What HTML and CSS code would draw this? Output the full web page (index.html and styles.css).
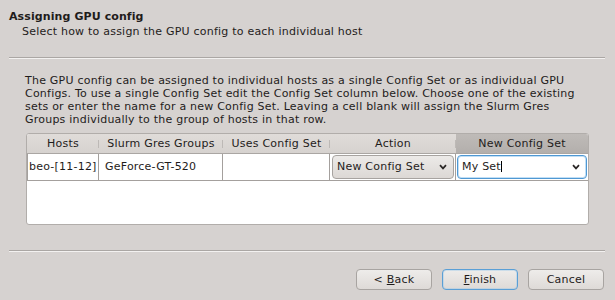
FILE: index.html
```html
<!DOCTYPE html>
<html>
<head>
<meta charset="utf-8">
<title>Assigning GPU config</title>
<link rel="stylesheet" href="styles.css">
</head>
<body>
<div class="wizard">
  <div class="page-head">
    <div class="title">Assigning GPU config</div>
    <div class="subtitle">Select how to assign the GPU config to each individual host</div>
  </div>
  <div class="sep"></div>
  <div class="content">
    <p class="intro">The GPU config can be assigned to individual hosts as a single Config Set or as individual GPU<br>Configs. To use a single Config Set edit the Config Set column below. Choose one of the existing<br>sets or enter the name for a new Config Set. Leaving a cell blank will assign the Slurm Gres<br>Groups individually to the group of hosts in that row.</p>
    <div class="table">
      <div class="thead">
        <div class="th">Hosts</div>
        <div class="th">Slurm Gres Groups</div>
        <div class="th">Uses Config Set</div>
        <div class="th">Action</div>
        <div class="th sorted">New Config Set</div>
      </div>
      <div class="row">
        <div class="td c-hosts">beo-[11-12]</div>
        <div class="td c-groups">GeForce-GT-520</div>
        <div class="td"></div>
        <div class="td c-action">
          <div class="combo"><span>New Config Set</span><svg class="chev" width="8" height="6" viewBox="0 0 8 6"><path d="M1 1.2 L4 4.4 L7 1.2" fill="none" stroke="#2a2726" stroke-width="1.7"/></svg></div>
        </div>
        <div class="td c-new">
          <div class="combo edit"><span>My Set<span class="caret"></span></span><svg class="chev" width="8" height="6" viewBox="0 0 8 6"><path d="M1 1.2 L4 4.4 L7 1.2" fill="none" stroke="#2a2726" stroke-width="1.7"/></svg></div>
        </div>
      </div>
    </div>
  </div>
  <div class="sep"></div>
  <div class="buttons">
    <button class="btn"><span>&lt; <u>B</u>ack</span></button>
    <button class="btn default"><span><u>F</u>inish</span></button>
    <button class="btn"><span>Cancel</span></button>
  </div>
</div>
</body>
</html>
```

FILE: styles.css
```css
* { box-sizing: border-box; }
html, body { margin: 0; padding: 0; }
body {
  background: #d6d2d0;
  font-family: "DejaVu Sans", "Liberation Sans", sans-serif;
  font-size: 11px;
  letter-spacing: 0.22px;
  color: #1f1c1b;
}
.wizard {
  width: 615px;
  height: 300px;
  display: flex;
  flex-direction: column;
}
.page-head {
  height: 57px;
  padding: 9px 0 0 9px;
}
.title {
  font-weight: bold;
  line-height: 15px;
  letter-spacing: 0.1px;
}
.subtitle {
  line-height: 15px;
  padding-left: 13px;
}
.sep {
  height: 2px;
  margin: 0 10px 0 9px;
  border-top: 1px solid #aba7a4;
  border-bottom: 1px solid #f3f1f0;
}
.content {
  flex: 1;
  padding: 15px 0 0 25px;
}
.intro {
  margin: 0;
  line-height: 13px;
  white-space: nowrap;
}
.table {
  margin-top: 7px;
  margin-left: 1px;
  width: 563px;
  height: 92px;
  background: #fff;
  border: 1px solid #b1adaa;
  border-radius: 3px;
  overflow: hidden;
}
.thead, .row {
  display: grid;
  grid-template-columns: 72px 124px 107px 126px 132px;
}
.thead {
  height: 20px;
  border-bottom: 1px solid #aaa6a3;
  background: linear-gradient(#e0dcd9, #d6d2cf);
}
.th {
  position: relative;
  line-height: 19px;
  text-align: center;
  white-space: nowrap;
}
.th::after {
  content: "";
  position: absolute;
  right: 0;
  top: 6px;
  width: 1px;
  height: 8px;
  background: #bdb9b6;
}
.th.sorted {
  background: linear-gradient(#bfbbb8, #b3afac);
}
.th.sorted::after { display: none; }
.row {
  height: 27px;
  border-bottom: 1px solid #a4a09d;
}
.td {
  border-right: 1px solid #a4a09d;
  line-height: 26px;
  white-space: nowrap;
  overflow: hidden;
}
.td:last-child { border-right: none; }
.c-hosts {
  border-left: 1px solid #a4a09d;
  padding-left: 1px;
}
.c-groups { padding-left: 6px; }
.c-action { padding: 1px 0 0 2px; }
.c-new { padding: 1px 0 0 1px; }
.combo {
  height: 24px;
  border: 1px solid #a7a3a0;
  border-radius: 4px;
  background: linear-gradient(#eceae8, #dcd8d5);
  display: flex;
  align-items: center;
  justify-content: space-between;
  padding: 0 6px 0 4px;
  line-height: 14px;
}
.c-action .combo { width: 122px; }
.c-new .combo { width: 130px; }
.combo.edit {
  background: #fff;
  border-color: #4f98d3;
  box-shadow: inset 0 0 0 1px rgba(120, 185, 232, 0.45);
}
.caret {
  display: inline-block;
  width: 1px;
  height: 11px;
  background: #000;
  vertical-align: -2px;
}
.chev { display: block; }
.buttons {
  height: 48px;
  display: flex;
  justify-content: flex-end;
  gap: 10px;
  padding: 17px 11px 10px 0;
}
.btn {
  width: 76px;
  height: 21px;
  margin: 0;
  padding: 0;
  border: 1px solid #a8a4a1;
  border-radius: 4px;
  background: linear-gradient(#eeecea, #dedad7);
  font-family: inherit;
  font-size: 11px;
  letter-spacing: 0.22px;
  color: #1f1c1b;
  display: flex;
  align-items: center;
  justify-content: center;
}
.btn.default {
  border-color: #5a9fd6;
  box-shadow: inset 0 0 0 1px rgba(140, 195, 235, 0.35);
}
```
